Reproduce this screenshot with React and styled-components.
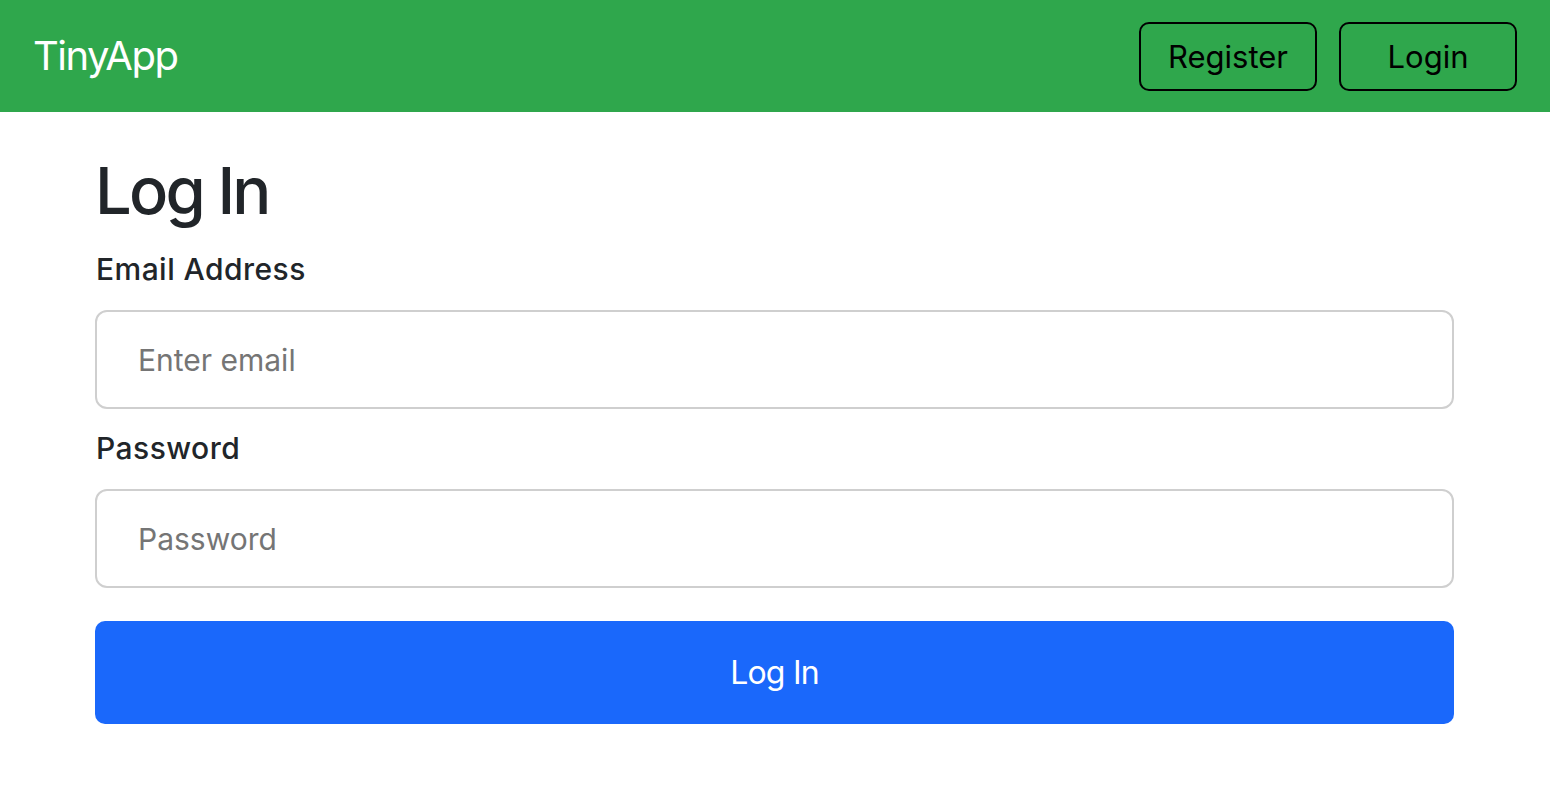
import React from "react"
import styled, { createGlobalStyle } from "styled-components"

const GlobalStyle = createGlobalStyle`
  body {
    margin: 0;
    background: #fff;
    font-family: Inter, "Liberation Sans", sans-serif;
    color: #212529;
  }
`

const Navbar = styled.nav`
  height: 112px;
  background: #2fa74c;
  display: flex;
  align-items: center;
  justify-content: space-between;
  padding: 0 33px;
  box-sizing: border-box;
`

const Brand = styled.a`
  color: #fff;
  font-size: 40px;
  line-height: 48px;
  text-decoration: none;
  letter-spacing: -1.5px;
`

const NavActions = styled.div`
  display: flex;
  gap: 22px;
`

const NavButton = styled.button`
  width: 178px;
  height: 69px;
  border: 2px solid #000;
  border-radius: 10px;
  background: transparent;
  color: #000;
  font-family: inherit;
  font-size: 31px;
  line-height: 1;
  cursor: pointer;
`

const Main = styled.main`
  width: 1359px;
  margin-left: 95px;
  padding-top: 40px;
`

const Title = styled.h1`
  margin: 0 0 17px;
  font-size: 65px;
  line-height: 78px;
  font-weight: 500;
  letter-spacing: -2.8px;
`

const Form = styled.form`
  display: flex;
  flex-direction: column;
`

const Label = styled.label`
  display: block;
  font-size: 30px;
  line-height: 45px;
  font-weight: 500;
  letter-spacing: 0.45px;
  margin-bottom: 18px;
  padding-left: 1px;
`

const Input = styled.input`
  display: block;
  box-sizing: border-box;
  width: 100%;
  height: 99px;
  margin-bottom: ${({ $gap }) => $gap}px;
  padding: 0 41px;
  border: 2px solid #cfcfcf;
  border-radius: 12px;
  font-family: inherit;
  font-size: 30px;
  color: #212529;
  outline: none;

  &::placeholder {
    color: #757575;
  }
`

const SubmitButton = styled.button`
  height: 103px;
  border: none;
  border-radius: 10px;
  background: #1a68fb;
  color: #fff;
  font-family: inherit;
  font-size: 32px;
  letter-spacing: -0.8px;
  cursor: pointer;
`

export default function App() {
  return (
    <>
      <GlobalStyle />
      <Navbar>
        <Brand href="#">TinyApp</Brand>
        <NavActions>
          <NavButton>Register</NavButton>
          <NavButton>Login</NavButton>
        </NavActions>
      </Navbar>
      <Main>
        <Title>Log In</Title>
        <Form onSubmit={(e) => e.preventDefault()}>
          <Label htmlFor="email">Email Address</Label>
          <Input id="email" type="email" placeholder="Enter email" $gap={17} />
          <Label htmlFor="password">Password</Label>
          <Input id="password" type="password" placeholder="Password" $gap={33} />
          <SubmitButton type="submit">Log In</SubmitButton>
        </Form>
      </Main>
    </>
  )
}
